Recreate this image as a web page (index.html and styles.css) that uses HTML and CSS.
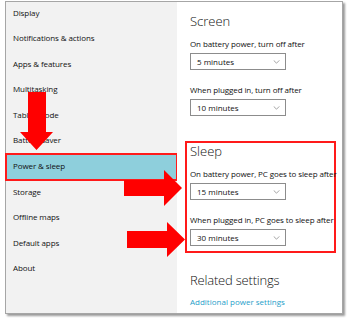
FILE: index.html
```html
<!DOCTYPE html>
<html>
<head>
    <title>Power &amp; sleep</title>
    <link rel="stylesheet" href="styles.css">
</head>
<body>
    <div class="window">
        <div class="nav">
            <div class="nav-item">Display</div>
            <div class="nav-item">Notifications &amp; actions</div>
            <div class="nav-item">Apps &amp; features</div>
            <div class="nav-item">Multitasking</div>
            <div class="nav-item">Tablet mode</div>
            <div class="nav-item">Battery saver</div>
            <div class="nav-item active">Power &amp; sleep</div>
            <div class="nav-item">Storage</div>
            <div class="nav-item">Offline maps</div>
            <div class="nav-item">Default apps</div>
            <div class="nav-item">About</div>
        </div>

        <div class="content">
            <h2>Screen</h2>
            <div class="field">
                <div class="label">On battery power, turn off after</div>
                <div class="select">5 minutes<svg class="chevron" viewBox="0 0 8 5"><polyline points="0.5,0.5 4,4 7.5,0.5"/></svg></div>
            </div>
            <div class="field">
                <div class="label">When plugged in, turn off after</div>
                <div class="select">10 minutes<svg class="chevron" viewBox="0 0 8 5"><polyline points="0.5,0.5 4,4 7.5,0.5"/></svg></div>
            </div>

            <div class="sleep-box">
                <h2>Sleep</h2>
                <div class="field">
                    <div class="label">On battery power, PC goes to sleep after</div>
                    <div class="select">15 minutes<svg class="chevron" viewBox="0 0 8 5"><polyline points="0.5,0.5 4,4 7.5,0.5"/></svg></div>
                </div>
                <div class="field">
                    <div class="label">When plugged in, PC goes to sleep after</div>
                    <div class="select">30 minutes<svg class="chevron" viewBox="0 0 8 5"><polyline points="0.5,0.5 4,4 7.5,0.5"/></svg></div>
                </div>
            </div>

            <h2 class="related">Related settings</h2>
            <a class="link" href="#">Additional power settings</a>
        </div>
    </div>

    <!-- annotation arrows -->
    <svg class="arrows" viewBox="0 0 350 322">
        <polygon points="28,92 46,92 46,132 53,132 36.5,150 20,132 28,132"/>
        <polygon points="124,180 164,180 164,170 182,188 164,206 164,196 124,196"/>
        <polygon points="127,231 167,231 167,222 185,239.5 167,257 167,248 127,248"/>
    </svg>
</body>
</html>
```

FILE: styles.css
```css
body {
    margin: 0;
    background: #fff;
    font-family: "Open Sans", "Noto Sans", sans-serif;
    color: #111;
    position: relative;
    width: 350px;
    height: 322px;
    overflow: hidden;
}
.window {
    display: flex;
    margin: 1px 0 0 5px;
    width: 338px;
    height: 313px;
    box-sizing: border-box;
    border: 1px solid #a6a6a6;
    box-shadow: 2px 2px 2px #9a9a9a;
}
.nav {
    width: 172px;
    background: #f2f2f2;
}
.nav-item {
    height: 25.6px;
    line-height: 24px;
    padding-left: 7px;
    font-size: 8px;
    letter-spacing: -0.1px;
}
.nav-item:first-child { margin-top: -1.5px; }
.nav-item.active {
    background: #8ecfdc;
    box-shadow: 0 0 0 1px #ff1a1a, inset 0 0 0 1px #ff1a1a;
}
.content {
    flex: 1;
    background: #fff;
    padding: 11px 6px 0 13px;
}
h2 {
    margin: 0;
    font-size: 13px;
    font-weight: 300;
    line-height: 16px;
    color: #111;
}
.field { margin-top: 9px; }
.field + .field { margin-top: 14px; }
.label {
    font-size: 8px;
    line-height: 12px;
    letter-spacing: -0.1px;
    white-space: nowrap;
}
.select {
    position: relative;
    margin-top: 3px;
    width: 96px;
    height: 17px;
    box-sizing: border-box;
    border: 1px solid #8c8c8c;
    padding-left: 6px;
    font-size: 8px;
    line-height: 15px;
}
.chevron {
    position: absolute;
    right: 5px;
    top: 6px;
    width: 7px;
    height: 4px;
    fill: none;
    stroke: #707070;
    stroke-width: 0.8;
}
.sleep-box {
    margin: 25px 0 0 -5px;
    width: 151px;
    box-sizing: border-box;
    border: 2px solid #ff1a1a;
    padding: 0 0 5px 3px;
}
.related {
    margin-top: 19px;
    letter-spacing: -0.2px;
}
.link {
    display: block;
    margin-top: 8px;
    font-size: 8px;
    line-height: 12px;
    color: #1f9ec9;
    text-decoration: none;
}
.arrows {
    position: absolute;
    left: 0;
    top: 0;
    width: 350px;
    height: 322px;
    fill: #ff0000;
}
```
